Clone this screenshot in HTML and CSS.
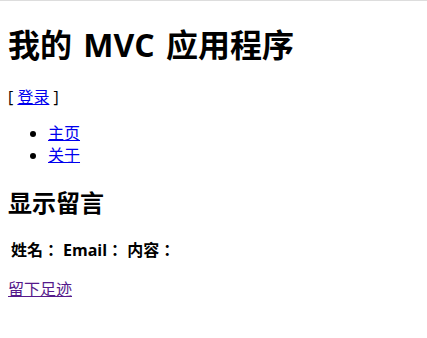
FILE: index.html
```html
<!DOCTYPE html>
<html>
<head>
<title>我的 MVC 应用程序</title>
<link rel="stylesheet" href="styles.css">
</head>
<body>

<div class="page">
  <h1>我的 MVC 应用程序</h1>
  <p class="login">[ <a href="#">登录</a> ]</p>
  <ul class="menu">
    <li><a href="#">主页</a></li>
    <li><a href="#">关于</a></li>
  </ul>

  <h2>显示留言</h2>
  <table class="messages">
    <tr>
      <th>姓名：</th>
      <th>Email：</th>
      <th>内容：</th>
    </tr>
  </table>
  <p><a href="#" class="visited">留下足迹</a></p>
</div>

</body>
</html>
```

FILE: styles.css
```css
html {
  border-top: 1px solid #ddd;
}

body {
  margin: 8px;
  font-family: "Open Sans", "Noto Sans CJK SC", sans-serif;
  font-size: 16px;
  line-height: 1.3;
  color: #000;
}

a {
  color: #0000ee;
}

a.visited {
  color: #551a8b;
}

h1 {
  font-size: 32px;
  margin: 15px 0 21px;
  word-spacing: 3px;
}

.login {
  margin: 0 0 15px;
}

.menu {
  margin: 0;
  padding-left: 40px;
}

.menu li {
  line-height: 22px;
}

h2 {
  font-size: 24px;
  margin: 21px 0 18px;
}

.messages th {
  text-align: left;
  font-family: "Open Sans", "Noto Sans CJK TC", sans-serif;
}
```
